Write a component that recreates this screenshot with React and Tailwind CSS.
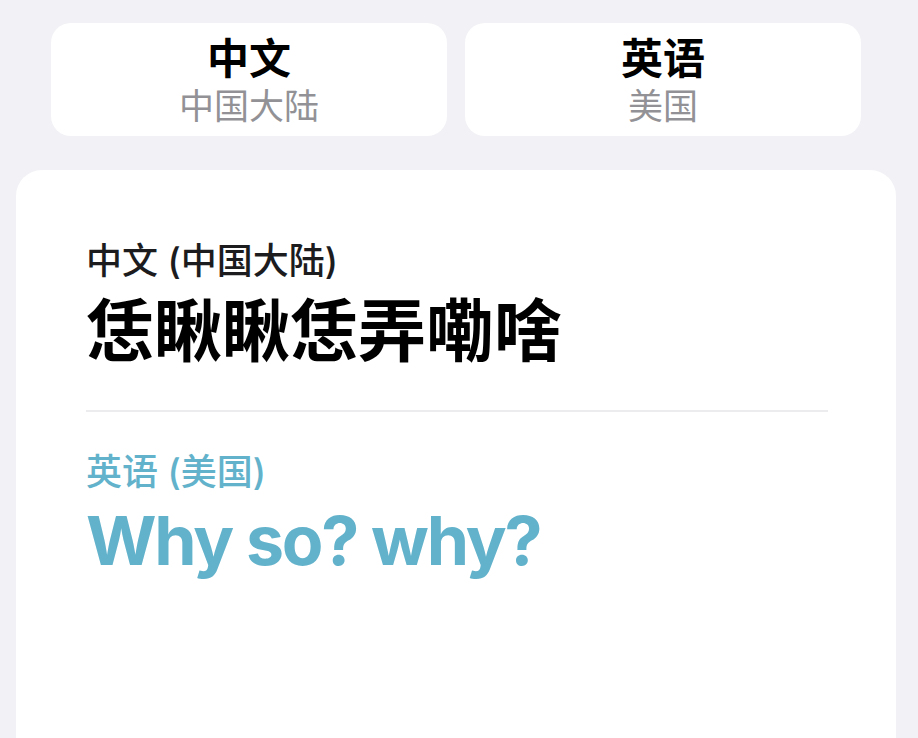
import React from 'react';

const font = { fontFamily: '"Inter", "Noto Sans CJK SC", sans-serif' };

const tabs = [
  { title: '中文', sub: '中国大陆' },
  { title: '英语', sub: '美国' },
];

export default function App() {
  return (
    <div className="h-[738px] w-[918px] overflow-hidden bg-[#f2f1f6]" style={font}>
      <div className="flex gap-[18px] pl-[51px] pr-[57px] pt-[23px]">
        {tabs.map((t) => (
          <div
            key={t.title}
            className="flex h-[113px] flex-1 flex-col items-center rounded-[20px] bg-white pt-[12px]"
          >
            <div className="text-[42px] leading-[48px] font-semibold text-black">{t.title}</div>
            <div className="mt-[3px] text-[35px] leading-[40px] text-[#929296]">{t.sub}</div>
          </div>
        ))}
      </div>

      <div className="ml-[16px] mr-[22px] mt-[34px] h-[620px] rounded-t-[26px] bg-white px-[70px] pt-[71px]">
        <div className="text-[36px] leading-[40px] font-medium text-[#1c1c1e]">中文 (中国大陆)</div>
        <div className="mt-[14px] text-[68px] leading-[72px] font-bold text-black">
          恁瞅瞅恁弄嘞啥
        </div>
        <div className="mt-[43px] h-[2px] w-[742px] bg-[#ececee]" />
        <div className="mt-[40px] text-[36px] leading-[40px] font-medium text-[#62b2cb]">英语 (美国)</div>
        <div className="mt-[8px] text-[68px] leading-[80px] font-bold tracking-[-2.2px] text-[#62b2cb]">
          Why so? why?
        </div>
      </div>
    </div>
  );
}
